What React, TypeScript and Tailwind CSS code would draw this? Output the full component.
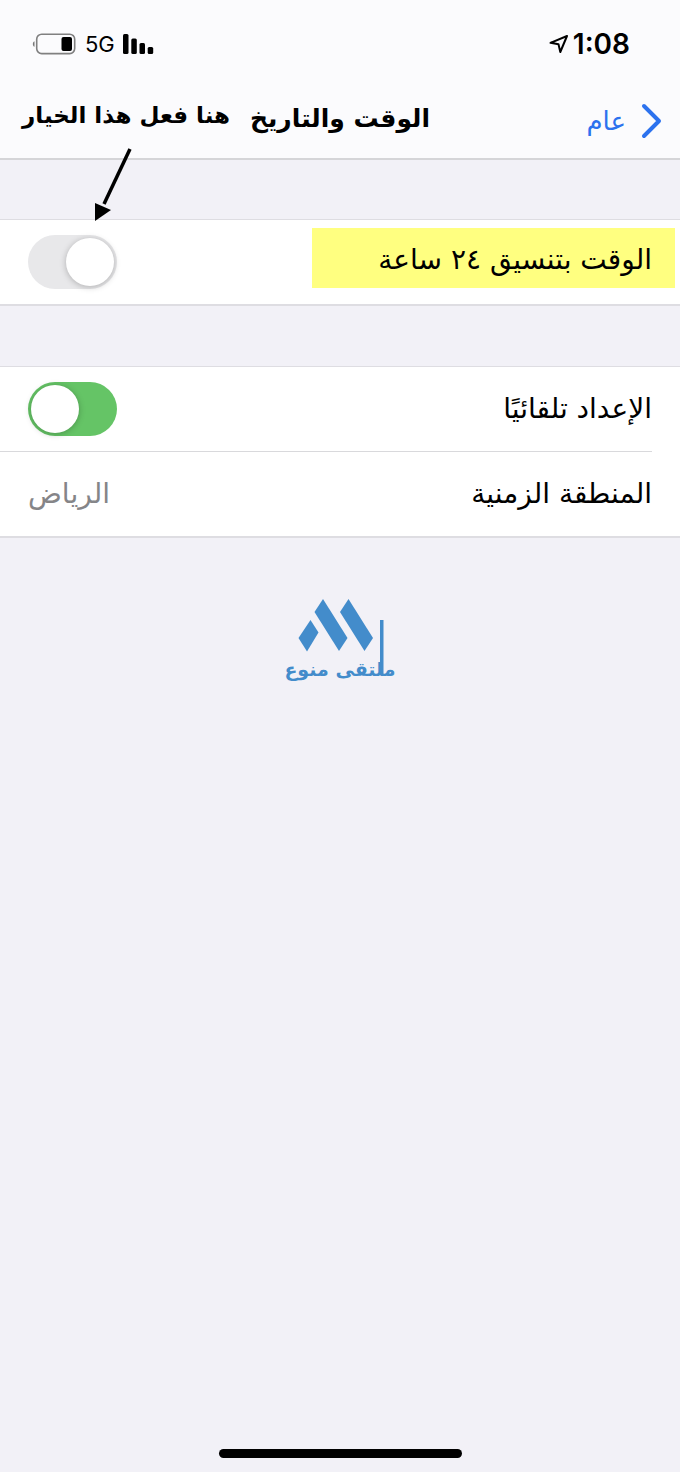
import { useState } from 'react';

type SwitchProps = {
  id: string;
  checked: boolean;
  onChange: (value: boolean) => void;
};

// thumb is the ::before, it sits at the start (right) when off
const Switch = ({ id, checked, onChange }: SwitchProps) => (
  <input
    id={id}
    type="checkbox"
    role="switch"
    checked={checked}
    onChange={(e) => onChange(e.target.checked)}
    className="flex h-[54px] w-[89px] shrink-0 cursor-pointer appearance-none items-center rounded-full bg-[#e8e8ea] px-[3px] before:size-12 before:rounded-full before:bg-white before:shadow-[0_1px_6px_rgba(0,0,0,0.25)] before:content-[''] checked:justify-end checked:bg-[#65c466]"
  />
);

const StatusBar = () => (
  <div className="flex h-[84px] items-center justify-between pr-[50px] pl-8 pt-1">
    <div className="flex items-center gap-1">
      <svg width="20" height="20" viewBox="0 0 20 20" fill="none" stroke="black" strokeWidth="2" strokeLinejoin="round" className="order-2">
        <path d="M18 2 L1.5 8.8 L9.5 10.2 L11.3 18 Z" />
      </svg>
      <span className="font-['Inter'] text-[28px] leading-8 font-semibold">1:08</span>
    </div>
    <div dir="ltr" className="flex items-center gap-2">
      <svg width="45" height="22" viewBox="0 0 45 22">
        <path d="M2.5 8.2 C0.3 9 0.3 13 2.5 13.8 Z" fill="#777" />
        <rect x="4.7" y="1.2" width="38" height="19.4" rx="5" fill="none" stroke="#808080" strokeWidth="1.6" />
        <rect x="29.5" y="4" width="10.5" height="14" rx="2" fill="black" />
      </svg>
      <span className="font-['Inter'] text-[22px] leading-8">5G</span>
      <svg width="31" height="20" viewBox="0 0 31 20">
        <rect x="0" y="0" width="5.5" height="20" rx="1.5" />
        <rect x="8.3" y="4.5" width="5.5" height="15.5" rx="1.5" />
        <rect x="16.5" y="9" width="5.5" height="11" rx="1.5" />
        <rect x="24.7" y="13" width="5.5" height="7" rx="1.5" />
      </svg>
    </div>
  </div>
);

const Logo = () => (
  <svg width="126" height="92" viewBox="-6 0 126 92" fill="#438ccb" className="mx-auto mt-[60px]" role="img" aria-label="ملتقى منوع">
    <path d="M27.5 22 L35.5 34.5 L24 53.5 L15.5 40 Z" />
    <path d="M40 1 L64.5 40 L56 53 L31.5 14 Z" />
    <path d="M65.5 1 L90 40 L81.5 53 L57 14 Z" />
    <rect x="97" y="22" width="3.5" height="55" />
    <text x="57" y="78" direction="rtl" textAnchor="middle" className="font-['DejaVu_Sans'] text-[19px] font-bold">ملتقى منوع</text>
  </svg>
);

const App = () => {
  const [use24h, setUse24h] = useState(false);
  const [autoSet, setAutoSet] = useState(true);

  return (
    <div dir="rtl" className="flex min-h-screen flex-col bg-[#f2f1f7] font-['DejaVu_Sans',sans-serif] text-[28px] text-black">
      <header className="border-b-2 border-[#d5d5d8] bg-[#fbfbfd]">
        <StatusBar />
        <div className="grid h-[74px] grid-cols-[1fr_auto_1fr] items-center px-[18px]">
          <a href="#general" className="flex items-center gap-3.5 text-[26px] text-[#2c72ee]">
            <svg width="22" height="36" viewBox="0 0 22 36" fill="none" stroke="currentColor" strokeWidth="4" strokeLinecap="round" strokeLinejoin="round">
              <path d="M4 3 L19 18 L4 33" />
            </svg>
            عام
          </a>
          <h1 className="pb-1 text-[25px] font-bold">الوقت والتاريخ</h1>
          <div className="relative ml-1 justify-self-end">
            <p className="pb-3 text-[23px] font-bold whitespace-nowrap">هنا فعل هذا الخيار</p>
            <svg width="40" height="78" viewBox="0 0 40 78" className="absolute top-[48px] left-[72px]">
              <path d="M36 3 L10 58" stroke="black" strokeWidth="3.5" />
              <path d="M1 57 L17 64 L1 75 Z" />
            </svg>
          </div>
        </div>
      </header>

      <main>
        <section className="mt-[59px] border-t border-b-2 border-[#dedde2] bg-white">
          <div className="flex h-[84px] items-center justify-between pr-[5px] pl-7">
            <label htmlFor="use-24h" className="mt-2 flex h-[60px] w-[363px] items-center self-start bg-[#ffff80] pt-1 pr-[23px]">
              الوقت بتنسيق ٢٤ ساعة
            </label>
            <Switch id="use-24h" checked={use24h} onChange={setUse24h} />
          </div>
        </section>

        <section className="mt-[60px] border-t border-b-2 border-[#dedde2] bg-white">
          <div className="mr-7 flex h-[85px] items-center justify-between border-b border-[#d9d9dc] pl-7">
            <label htmlFor="auto-set">الإعداد تلقائيًا</label>
            <Switch id="auto-set" checked={autoSet} onChange={setAutoSet} />
          </div>
          <div className="flex h-[84px] items-center justify-between px-7">
            <span>المنطقة الزمنية</span>
            <span className="text-[#858588]">الرياض</span>
          </div>
        </section>
        <Logo />
      </main>

      <div className="mx-auto mt-auto mb-[14px] h-[9px] w-[243px] rounded-full bg-black" />
    </div>
  );
};

export default App;
